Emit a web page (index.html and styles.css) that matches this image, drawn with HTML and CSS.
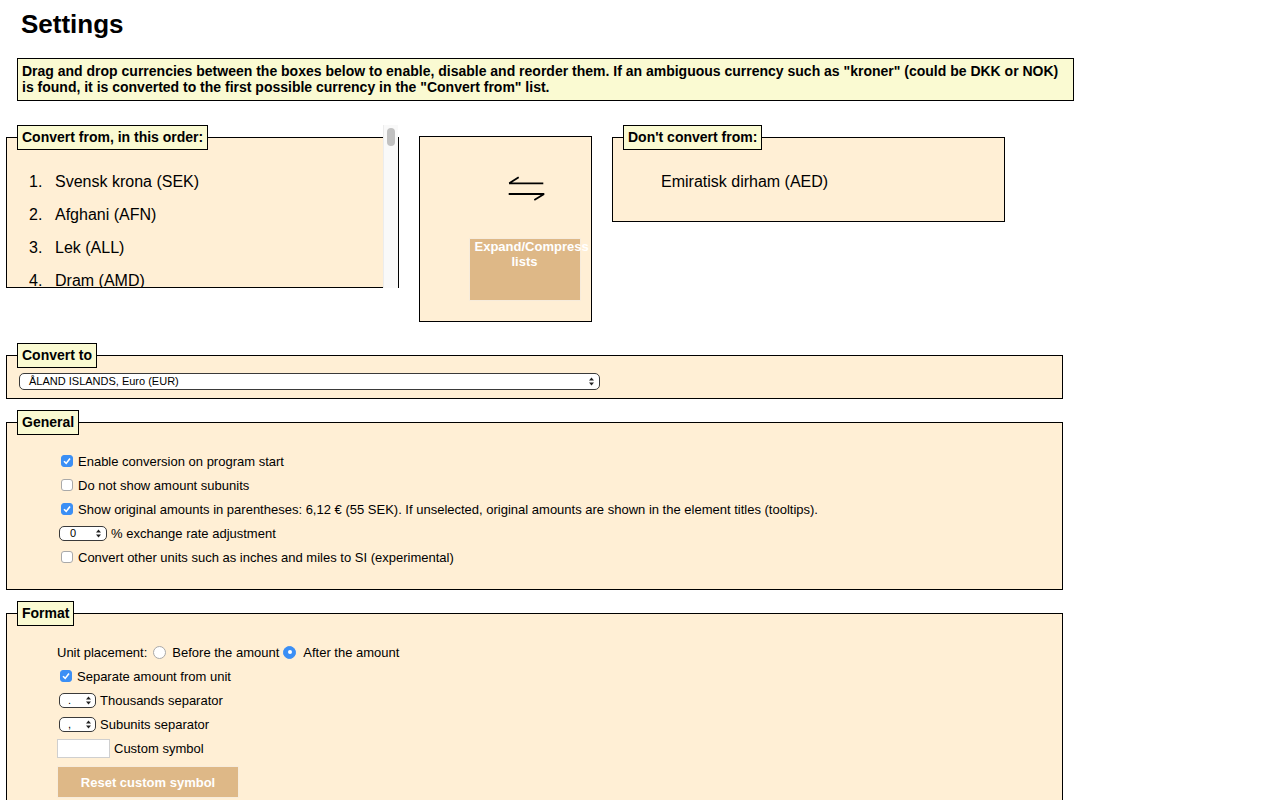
FILE: index.html
```html
<!DOCTYPE html>
<html lang="en">
<head>
<meta charset="utf-8">
<title>Settings</title>
<link rel="stylesheet" href="styles.css">
</head>
<body>
<h1 class="title">Settings</h1>
<div class="note">Drag and drop currencies between the boxes below to enable, disable and reorder them. If an ambiguous currency such as "kroner" (could be DKK or NOK) is found, it is converted to the first possible currency in the "Convert from" list.</div>

<div class="lists">
  <div class="from-wrap">
    <fieldset class="box from-box">
      <legend>Convert from, in this order:</legend>
      <div class="clip">
        <ol class="cur-list">
          <li>Svensk krona (SEK)</li>
          <li>Afghani (AFN)</li>
          <li>Lek (ALL)</li>
          <li>Dram (AMD)</li>
        </ol>
      </div>
    </fieldset>
    <div class="scrollbar"><div class="thumb"></div></div>
  </div>

  <div class="middle">
    <svg class="swap" width="38" height="26" viewBox="0 0 38 26" aria-hidden="true">
      <path d="M2 8.3 H36.3 M2.2 8.3 L11.7 2.3" fill="none" stroke="#000" stroke-width="1.8"/>
      <path d="M1.7 19 H37.3 M37.1 19 L27.3 25" fill="none" stroke="#000" stroke-width="1.8"/>
    </svg>
    <div class="btn expand"><span class="nw">Expand/Compress</span><br>lists</div>
  </div>

  <fieldset class="box not-box">
    <legend>Don't convert from:</legend>
    <ul class="not-list">
      <li>Emiratisk dirham (AED)</li>
    </ul>
  </fieldset>
</div>

<div class="sections">
  <fieldset class="box convert-to">
    <legend>Convert to</legend>
    <div class="sel sel-wide"><span>ÅLAND ISLANDS, Euro (EUR)</span><svg class="arr" width="5" height="9" viewBox="0 0 5 9"><path d="M0 3.6 L2.5 0.4 L5 3.6Z M0 5.4 L2.5 8.6 L5 5.4Z" fill="#222"/></svg></div>
  </fieldset>

  <fieldset class="box general">
    <legend>General</legend>
    <div class="opts">
      <div class="row"><span class="cb on"><svg width="10" height="10" viewBox="0 0 10 10"><path d="M2 5.2 L4.2 7.4 L8 2.6" fill="none" stroke="#fff" stroke-width="1.6"/></svg></span>Enable conversion on program start</div>
      <div class="row"><span class="cb"></span>Do not show amount subunits</div>
      <div class="row"><span class="cb on"><svg width="10" height="10" viewBox="0 0 10 10"><path d="M2 5.2 L4.2 7.4 L8 2.6" fill="none" stroke="#fff" stroke-width="1.6"/></svg></span>Show original amounts in parentheses: 6,12 € (55 SEK). If unselected, original amounts are shown in the element titles (tooltips).</div>
      <div class="row"><div class="sel sel-num"><span>0</span><svg class="arr" width="5" height="9" viewBox="0 0 5 9"><path d="M0 3.6 L2.5 0.4 L5 3.6Z M0 5.4 L2.5 8.6 L5 5.4Z" fill="#222"/></svg></div>% exchange rate adjustment</div>
      <div class="row"><span class="cb"></span>Convert other units such as inches and miles to SI (experimental)</div>
    </div>
  </fieldset>

  <fieldset class="box format">
    <legend>Format</legend>
    <div class="opts">
      <div class="row">Unit placement:<span class="rd rd-1"></span>Before the amount<span class="rd rd-2 on"><span class="dot"></span></span>After the amount</div>
      <div class="row"><span class="cb cb-f on"><svg width="10" height="10" viewBox="0 0 10 10"><path d="M2 5.2 L4.2 7.4 L8 2.6" fill="none" stroke="#fff" stroke-width="1.6"/></svg></span>Separate amount from unit</div>
      <div class="row"><div class="sel sel-sep"><span>.</span><svg class="arr" width="5" height="9" viewBox="0 0 5 9"><path d="M0 3.6 L2.5 0.4 L5 3.6Z M0 5.4 L2.5 8.6 L5 5.4Z" fill="#222"/></svg></div>Thousands separator</div>
      <div class="row"><div class="sel sel-sep"><span>,</span><svg class="arr" width="5" height="9" viewBox="0 0 5 9"><path d="M0 3.6 L2.5 0.4 L5 3.6Z M0 5.4 L2.5 8.6 L5 5.4Z" fill="#222"/></svg></div>Subunits separator</div>
      <div class="row"><span class="txt"></span>Custom symbol</div>
      <div class="btn reset">Reset custom symbol</div>
    </div>
  </fieldset>
</div>
</body>
</html>
```

FILE: styles.css
```css
* { box-sizing: border-box; }

body {
  margin: 0;
  font-family: "Liberation Sans", Arial, sans-serif;
  color: #000;
  background: #fff;
  overflow: hidden;
}

.title {
  margin: 10px 0 19px 21px;
  font-size: 26px;
  line-height: 29px;
  font-weight: bold;
}

.note {
  margin-left: 17px;
  width: 1057px;
  border: 1px solid #000;
  background: #fafad2;
  padding: 4px 4px 5px;
  font-size: 14px;
  font-weight: bold;
  line-height: 16px;
}

.lists {
  display: flex;
  align-items: flex-start;
  gap: 20px;
  margin: 24px 0 0 6px;
}

.box {
  margin: 0;
  min-width: 0;
  border: 1px solid #000;
  background: #ffefd5;
  padding: 0 10px;
}

.box > legend {
  margin: 0;
  padding: 3px 4px 4px;
  border: 1px solid #000;
  background: #fafad2;
  font-size: 14px;
  font-weight: bold;
  line-height: 16px;
}

.from-wrap {
  position: relative;
  flex: none;
  width: 393px;
}

.from-box {
  width: 393px;
  padding-bottom: 0;
}

.clip {
  height: 137px;
  overflow: hidden;
}

.cur-list {
  list-style: none;
  margin: 15px 0 0;
  padding: 0 0 0 12px;
  font-size: 16px;
  counter-reset: cur;
}

.cur-list li {
  display: flex;
  height: 33px;
  line-height: 33px;
  white-space: nowrap;
}

.cur-list li::before {
  counter-increment: cur;
  content: counter(cur) ".";
  flex: none;
  width: 26px;
}

.scrollbar {
  position: absolute;
  top: 0;
  bottom: 0;
  right: 1px;
  width: 15px;
  background: #f9f9f9;
  border-left: 1px solid #ececec;
}

.thumb {
  width: 8px;
  height: 18px;
  margin: 3px 0 0 3px;
  border-radius: 4px;
  background: #c1c1c1;
}

.middle {
  flex: none;
  width: 173px;
  height: 186px;
  margin-top: 11px;
  border: 1px solid #000;
  background: #ffefd5;
  padding: 38px 0 0 40px;
  display: flex;
  flex-direction: column;
  align-items: center;
}

.swap { display: block; flex: none; }

.btn {
  background: #deb887;
  border: 1px solid #f7ecdc;
  color: #fff;
  font-size: 13px;
  font-weight: bold;
}

.expand {
  flex: none;
  margin: 37px 2px 0 0;
  width: 112px;
  height: 63px;
  padding: 0 5px;
  line-height: 15px;
  text-align: center;
}

.nw { white-space: nowrap; }

.not-box {
  flex: none;
  width: 393px;
  padding-bottom: 9px;
}

.not-list {
  list-style: none;
  margin: 15px 0 14px;
  padding: 0 0 0 38px;
  font-size: 16px;
}

.not-list li {
  height: 33px;
  line-height: 33px;
}

.sections {
  margin: 21px 0 0 6px;
  width: 1057px;
  display: flex;
  flex-direction: column;
  gap: 11px;
}

.sections .box {
  padding: 14px 10px 20px;
}

.sections .convert-to {
  padding: 5px 10px 8px;
}

.sel {
  display: flex;
  flex: none;
  align-items: center;
  justify-content: space-between;
  height: 15px;
  border: 1px solid #3a3a3a;
  border-radius: 5px;
  background: #fff;
  font-size: 11px;
  line-height: 13px;
  padding: 0 5px 0 9px;
}

.arr { display: block; flex: none; }

.sel-wide {
  width: 581px;
  height: 17px;
  margin-left: 2px;
  padding-right: 5px;
}

.sel-num {
  width: 48px;
  margin: 0 4px 0 2px;
  padding-left: 10px;
}

.sel-sep {
  width: 37px;
  margin: 0 4px 0 2px;
  padding-left: 8px;
  padding-right: 4px;
}

.opts {
  margin-left: 40px;
}

.row {
  display: flex;
  align-items: center;
  height: 24px;
  font-size: 13px;
  white-space: nowrap;
}

.cb {
  flex: none;
  display: flex;
  align-items: center;
  justify-content: center;
  width: 12px;
  height: 12px;
  margin: 0 5px 0 4px;
  border: 1px solid #a9a9a9;
  border-radius: 3px;
  background: #fff;
}

.cb-f { margin-left: 3px; }

.cb.on {
  background: #3b8ff5;
  border-color: #3b8ff5;
}

.rd {
  flex: none;
  display: flex;
  align-items: center;
  justify-content: center;
  width: 13px;
  height: 13px;
  border: 1px solid #a9a9a9;
  border-radius: 50%;
  background: #fff;
}

.rd-1 { margin: 0 6px 0 6px; }
.rd-2 { margin: 0 7px 0 4px; }

.rd.on {
  background: #3b8ff5;
  border-color: #3b8ff5;
}

.dot {
  width: 4px;
  height: 4px;
  border-radius: 50%;
  background: #fff;
}

.txt {
  flex: none;
  width: 53px;
  height: 19px;
  margin-right: 4px;
  border: 1px solid #cfcfcf;
  background: #fff;
}

.reset {
  display: flex;
  align-items: center;
  justify-content: center;
  margin-top: 6px;
  width: 182px;
  height: 32px;
}
```
